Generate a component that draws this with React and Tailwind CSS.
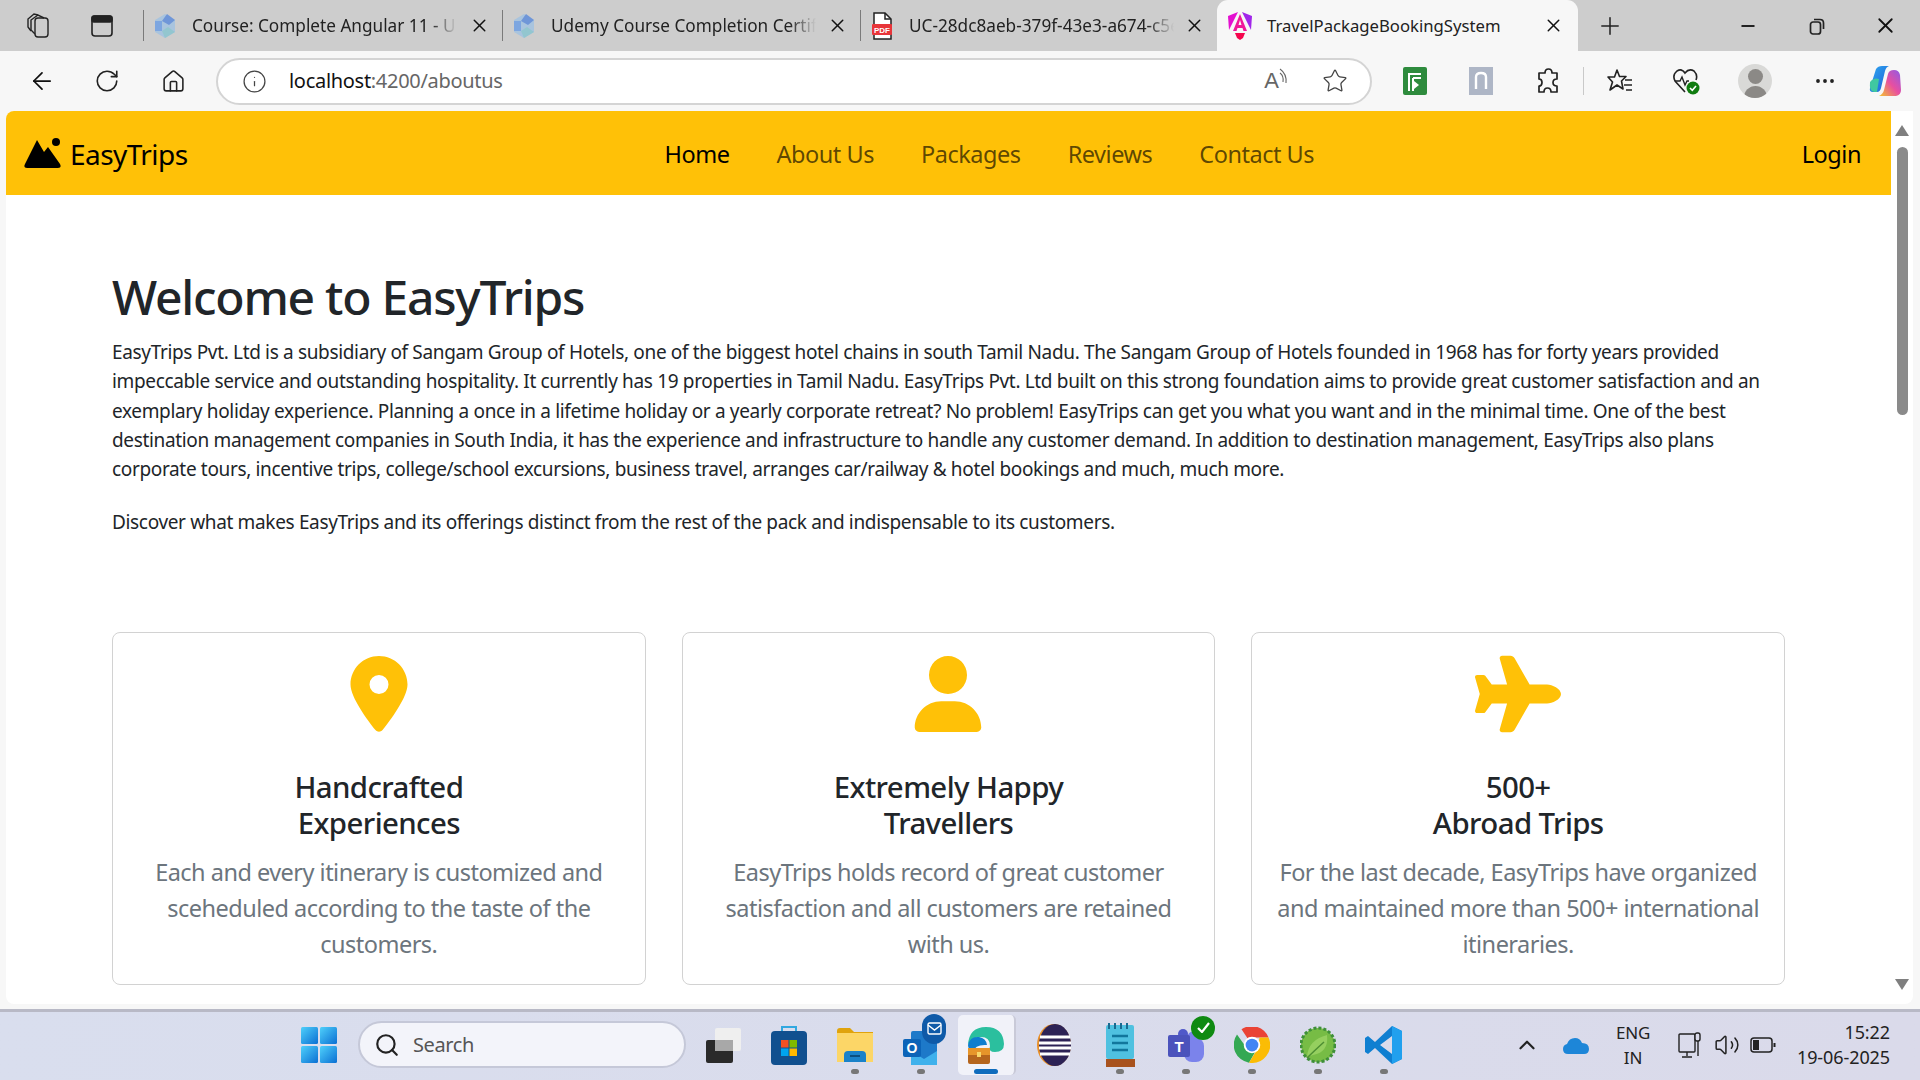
import React from 'react';
import { ArrowLeft, RotateCw, Home, Info, Star, Plus, X, Minus, MoreHorizontal, Search, ChevronUp, Volume2 } from 'lucide-react';
import { FaLocationDot, FaUser, FaPlane } from 'react-icons/fa6';

function EdgeFavicon() {
  return (
    <svg width="22" height="26" viewBox="0 0 22 26">
      <path d="M11 1 L21 7 V19 L11 25 L1 19 V7 Z" fill="#a9c4de" />
      <path d="M13 1 L21 7 L15 12 L8 8 Z" fill="#6f96d8" />
      <path d="M1 8 L8 8 L8 18 L1 18 Z" fill="#7da6e0" />
      <path d="M11 25 L21 19 L14 14 L8 18 Z" fill="#93c6cf" />
    </svg>
  );
}

function PdfFavicon() {
  return (
    <svg width="24" height="28" viewBox="0 0 24 28">
      <path d="M4 1 H15 L21 7 V27 H4 Z" fill="#fff" stroke="#222" strokeWidth="1.5" />
      <path d="M15 1 V7 H21" fill="none" stroke="#222" strokeWidth="1.5" />
      <rect x="2" y="12" width="20" height="11" rx="1" fill="#e8353a" />
      <text x="12" y="21" textAnchor="middle" fontSize="8" fontWeight="700" fill="#fff" fontFamily="Liberation Sans">PDF</text>
    </svg>
  );
}

function AngularFavicon() {
  return (
    <svg width="24" height="30" viewBox="0 0 24 30">
      <path d="M10 1 L1 19 L0 5 Z" fill="#e40fd0" />
      <path d="M14 1 L24 5 L23 19 Z" fill="#a126ea" />
      <path d="M12 3 L19 20 H15.5 L14.5 17 H9.5 L8.5 20 H5 Z M12 9 L10.5 14 H13.5 Z" fill="#f0189a" />
      <path d="M7 22 H17 L15 27 L12 29 L9 27 Z" fill="#f5054e" />
    </svg>
  );
}

function Tab({ icon, title, w }) {
  return (
    <div className={`flex items-center h-[51px] ${w}`}>
      <div className="w-px h-[31px] bg-[#7a7a7a]" />
      <div className="w-[24px] ml-[9px] flex justify-center">{icon}</div>
      <span className="ml-[15px] w-[265px] overflow-hidden text-[17.2px] text-[#222] whitespace-nowrap [mask-image:linear-gradient(to_right,black_90%,transparent)]">{title}</span>
      <X size={21} strokeWidth={1.7} className="ml-auto mr-[12px] text-[#111]" />
    </div>
  );
}

function TabStrip() {
  return (
    <div className="flex items-center h-[51px] bg-[#cdcdcd] pl-[26px]">
      <svg width="24" height="26" viewBox="0 0 24 26" fill="none" stroke="#222" strokeWidth="1.4">
        <rect x="9" y="5" width="13" height="19" rx="3" />
        <path d="M9 21 L5 17 V7 L12 2 L18 5" />
        <path d="M5 18 L2 14 V6 L8 1 L12 2" />
      </svg>
      <svg className="ml-[41px]" width="22" height="24" viewBox="0 0 22 24" fill="none" stroke="#222" strokeWidth="1.6">
        <rect x="1" y="2" width="20" height="20" rx="3" />
        <rect x="1" y="2" width="20" height="6" rx="2" fill="#222" />
      </svg>
      <div className="ml-[30px] flex">
        <Tab icon={<EdgeFavicon />} title="Course: Complete Angular 11 - Ultimate" w="w-[359px]" />
        <Tab icon={<EdgeFavicon />} title="Udemy Course Completion Certificate" w="w-[358px]" />
        <Tab icon={<PdfFavicon />} title="UC-28dc8aeb-379f-43e3-a674-c5e1" w="w-[357px]" />
        <div className="flex items-center h-[51px] w-[361px] rounded-t-[11px] bg-[#f7f7f7] pl-[11px]">
          <AngularFavicon />
          <span className="ml-[15px] text-[16.7px] text-[#222] whitespace-nowrap">TravelPackageBookingSystem</span>
          <X size={21} strokeWidth={1.7} className="ml-auto mr-[14px] text-[#111]" />
        </div>
      </div>
      <Plus size={28} strokeWidth={1.3} className="ml-[18px] text-[#222]" />
      <Minus size={20} strokeWidth={2.2} className="ml-[114px] text-[#222]" />
      <svg className="ml-[51px]" width="16" height="18" viewBox="0 0 16 18" fill="none" stroke="#222" strokeWidth="1.7">
        <rect x="1.5" y="5" width="10" height="12" rx="2.5" />
        <path d="M5 2.5 H11 Q14.5 2.5 14.5 6 V12" />
      </svg>
      <X size={25} strokeWidth={1.7} className="ml-[48px] text-[#111]" />
    </div>
  );
}

function Toolbar() {
  return (
    <div className="flex items-center h-[60px] bg-[#f7f7f7] pl-[28px]">
      <ArrowLeft size={28} strokeWidth={1.5} className="text-[#111]" />
      <RotateCw size={26} strokeWidth={1.5} className="ml-[38px] text-[#222]" />
      <Home size={25} strokeWidth={1.5} className="ml-[41px] text-[#222]" />
      <div className="ml-[30px] flex items-center w-[1156px] h-[47px] bg-white rounded-full border-2 border-[#d4d4d4] pl-[24px] pr-[22px]">
        <Info size={25} strokeWidth={1.2} className="text-[#444]" />
        <span className="ml-[22px] text-[20px] tracking-[-0.015em] text-[#111]">localhost<span className="text-[#666]">:4200/aboutus</span></span>
        <span className="ml-auto text-[22px] leading-none text-[#666] font-['Liberation_Sans',sans-serif]">A</span>
        <svg width="10" height="18" viewBox="0 0 10 18" fill="none" stroke="#666" strokeWidth="1.1" className="mb-[8px]">
          <path d="M1 1 Q8 6 7 15 M1 5 Q5 8 4 14" />
        </svg>
        <Star size={26} strokeWidth={1.2} className="ml-[33px] text-[#444]" />
      </div>
      <svg className="ml-[31px]" width="24" height="28" viewBox="0 0 24 28">
        <rect width="24" height="28" rx="2" fill="#2e8b3d" />
        <path d="M6 24 V7 H18 M10 11 H18 M10 11 V24" fill="none" stroke="#fff" strokeWidth="2" />
        <path d="M11 14 L16 18 L11 22 Z" fill="#fff" />
      </svg>
      <svg className="ml-[42px]" width="24" height="28" viewBox="0 0 24 28">
        <rect width="24" height="28" fill="#aeb6c6" />
        <path d="M7 22 V10 Q7 6 12 6 Q17 6 17 10 V22" fill="none" stroke="#fff" strokeWidth="2.4" />
      </svg>
      <svg className="ml-[43px]" width="24" height="28" viewBox="0 0 24 28" fill="none" stroke="#222" strokeWidth="1.7" strokeLinejoin="round">
        <path d="M9 6 Q9 2 12.5 2 Q16 2 16 6 H21 V12 Q17 12 17 15.500 Q17 19 21 19 V25 H15 Q15 21 11.500 21 Q8 21 8 25 H3 V19 Q6 19 6 15.500 Q6 12 3 12 V6 Z" />
      </svg>
      <div className="ml-[23px] w-px h-[28px] bg-[#c9c9c9]" />
      <svg className="ml-[23px]" width="26" height="28" viewBox="0 0 26 28" fill="none" stroke="#222" strokeWidth="1.6" strokeLinejoin="round">
        <path d="M10 3 L12.500 9.500 H19 L14.500 14 L16 22 L10 18 L3 23 L5.500 15 L1 10 H7.500 Z" />
        <path d="M18 13 H25 M17 18 H25 M19 23 H25" />
      </svg>
      <svg className="ml-[39px]" width="28" height="28" viewBox="0 0 28 28" fill="none">
        <path d="M13 25 L3 14 Q0 8 5 4 Q10 1 13 6 Q17 1 22 4 Q26 8 24 13" stroke="#222" strokeWidth="1.6" />
        <path d="M3 14 H8 L10 10 L13 18 L15 14 H17" stroke="#222" strokeWidth="1.4" />
        <circle cx="21" cy="21" r="6.5" fill="#107c10" />
        <path d="M18 21 L20.300 23.300 L24 19" stroke="#fff" strokeWidth="1.6" />
      </svg>
      <div className="ml-[38px] flex flex-col items-center justify-end w-[34px] h-[34px] rounded-full bg-[#d9d9d7] overflow-hidden">
        <div className="w-[15px] h-[15px] rounded-full bg-[#8b8986]" />
        <div className="mt-[2px] w-[23px] h-[12px] rounded-t-full bg-[#8b8986]" />
      </div>
      <MoreHorizontal size={24} strokeWidth={1.8} className="ml-[41px] text-[#222]" />
      <svg className="ml-[31px]" width="34" height="34" viewBox="0 0 34 34">
        <defs>
          <linearGradient id="cp1" x1="0" y1="0" x2="1" y2="1">
            <stop offset="0" stopColor="#2ea8f0" />
            <stop offset="1" stopColor="#1f5fd8" />
          </linearGradient>
          <linearGradient id="cp2" x1="0" y1="1" x2="1" y2="0">
            <stop offset="0" stopColor="#f5c52c" />
            <stop offset="0.5" stopColor="#e84fa0" />
            <stop offset="1" stopColor="#8d5be8" />
          </linearGradient>
        </defs>
        <path d="M8 5 Q10 2 14 2 H21 Q18 3 17 7 L13 24 Q12 28 9 28 H5 Q1 28 2 24 Z" fill="url(#cp1)" />
        <path d="M26 6 Q31 6 32 11 L33 26 Q33 31 28 32 H11 Q15 30 16 26 L20 10 Q21 6 26 6 Z" fill="url(#cp2)" />
        <path d="M2 18 Q6 13 11 15 L9 28 H6 Q1 27 2 18 Z" fill="#40c8a0" />
      </svg>
    </div>
  );
}

function NavBar() {
  return (
    <div className="flex items-center h-[84px] bg-[#ffc107] pl-[18px] pr-[30px] text-[23.5px] tracking-[-0.02em]">
      <svg width="38" height="30" viewBox="0 0 38 30">
        <circle cx="32" cy="4" r="4" fill="#000" />
        <path d="M13 2 L20 14 L24 9 L36 26 Q38 30 34 30 H3 Q-1 30 1 26 Z" fill="#000" />
      </svg>
      <span className="ml-[8px] pt-[1px] text-[28px] tracking-[-0.02em] text-black">EasyTrips</span>
      <div className="ml-[477px] pt-[3px] flex gap-[47px] text-black/65">
        <span className="text-black">Home</span>
        <span>About Us</span>
        <span>Packages</span>
        <span>Reviews</span>
        <span>Contact Us</span>
      </div>
      <span className="ml-auto pt-[3px] text-black">Login</span>
    </div>
  );
}

const cards = [
  {
    icon: <FaLocationDot size={76} />,
    title: ['Handcrafted', 'Experiences'],
    text: ['Each and every itinerary is customized and', 'sceheduled according to the taste of the', 'customers.'],
  },
  {
    icon: <FaUser size={76} />,
    title: ['Extremely Happy', 'Travellers'],
    text: ['EasyTrips holds record of great customer', 'satisfaction and all customers are retained', 'with us.'],
  },
  {
    icon: <FaPlane size={86} />,
    title: ['500+', 'Abroad Trips'],
    text: ['For the last decade, EasyTrips have organized', 'and maintained more than 500+ international', 'itineraries.'],
  },
];

function Card({ card }) {
  return (
    <div className="flex flex-col items-center h-[353px] pt-[23px] border border-[#d2d2d2] rounded-[8px] text-center">
      <div className="h-[76px] flex items-center text-[#ffc107]">{card.icon}</div>
      <h3 className="mt-[37px] text-[29.4px] leading-[36px] font-medium tracking-[-0.02em] text-[#212529]">
        {card.title[0]}<br />{card.title[1]}
      </h3>
      <p className="mt-[13px] text-[23.5px] leading-[36px] tracking-[-0.022em] text-[#6c757d]">
        {card.text[0]}<br />{card.text[1]}<br />{card.text[2]}
      </p>
    </div>
  );
}

function Page() {
  return (
    <div className="flex-1 min-w-0 overflow-hidden">
      <NavBar />
      <div className="pl-[106px] pr-[106px] pt-[72px]">
        <h1 className="text-[48px] leading-[59px] font-medium tracking-[-0.026em] text-[#212529]">Welcome to EasyTrips</h1>
        <p className="mt-[12px] text-[19px] leading-[29.3px] tracking-[-0.018em] text-[#212529] whitespace-nowrap">
          EasyTrips Pvt. Ltd is a subsidiary of Sangam Group of Hotels, one of the biggest hotel chains in south Tamil Nadu. The Sangam Group of Hotels founded in 1968 has for forty years provided<br />
          impeccable service and outstanding hospitality. It currently has 19 properties in Tamil Nadu. EasyTrips Pvt. Ltd built on this strong foundation aims to provide great customer satisfaction and an<br />
          exemplary holiday experience. Planning a once in a lifetime holiday or a yearly corporate retreat? No problem! EasyTrips can get you what you want and in the minimal time. One of the best<br />
          destination management companies in South India, it has the experience and infrastructure to handle any customer demand. In addition to destination management, EasyTrips also plans<br />
          corporate tours, incentive trips, college/school excursions, business travel, arranges car/railway &amp; hotel bookings and much, much more.
        </p>
        <p className="mt-[24px] text-[19px] leading-[29.3px] tracking-[-0.018em] text-[#212529]">
          Discover what makes EasyTrips and its offerings distinct from the rest of the pack and indispensable to its customers.
        </p>
        <div className="mt-[94px] grid grid-cols-3 gap-[36px] w-[1673px]">
          {cards.map((c) => <Card key={c.title[0]} card={c} />)}
        </div>
      </div>
    </div>
  );
}

function Scrollbar() {
  return (
    <div className="w-[22px] flex flex-col items-center pt-[14px] pb-[14px]">
      <div className="w-0 h-0 border-x-[7px] border-x-transparent border-b-[11px] border-b-[#7f7f7f]" />
      <div className="mt-[11px] w-[11px] h-[268px] rounded-full bg-[#8a8a8a]" />
      <div className="mt-auto w-0 h-0 border-x-[7px] border-x-transparent border-t-[11px] border-t-[#7f7f7f]" />
    </div>
  );
}

function TaskIcon({ children, dot, dotClass }) {
  return (
    <div className="relative w-[66px] h-[60px] flex items-center justify-center">
      {children}
      {dot && <div className={`absolute bottom-[1px] left-1/2 -translate-x-1/2 h-[5px] rounded-full ${dotClass || 'w-[8px] bg-[#777]'}`} />}
    </div>
  );
}

function Taskbar() {
  return (
    <div className="flex items-center h-[71px] border-t-[3px] border-[#b8b9c6] bg-gradient-to-r from-[#d9deee] to-[#dadaea] pl-[301px] pr-[30px] pb-[3px]">
      <svg width="36" height="36" viewBox="0 0 36 36">
        <defs>
          <linearGradient id="win" x1="0" y1="0" x2="1" y2="1">
            <stop offset="0" stopColor="#4fd0fb" />
            <stop offset="1" stopColor="#0a6fd3" />
          </linearGradient>
        </defs>
        <rect width="17" height="17" rx="1.500" fill="url(#win)" />
        <rect x="19" width="17" height="17" rx="1.500" fill="url(#win)" />
        <rect y="19" width="17" height="17" rx="1.500" fill="url(#win)" />
        <rect x="19" y="19" width="17" height="17" rx="1.500" fill="url(#win)" />
      </svg>
      <div className="ml-[21px] flex items-center w-[328px] h-[47px] rounded-full bg-[#f3f4fa] border-2 border-[#c5c8d8] pl-[14px]">
        <Search size={26} strokeWidth={2} className="text-[#222]" />
        <span className="ml-[13px] text-[20px] tracking-[-0.02em] text-[#555]">Search</span>
      </div>
      <div className="ml-[4px] flex">
        <TaskIcon>
          <svg width="40" height="36" viewBox="0 0 40 36">
            <rect x="3" y="13" width="27" height="23" rx="2" fill="#2a2a2a" />
            <rect x="12" y="1" width="26" height="23" rx="2" fill="#efefef" />
            <rect x="12" y="13" width="18" height="11" fill="#a8a8a8" />
          </svg>
        </TaskIcon>
        <TaskIcon>
          <svg width="36" height="40" viewBox="0 0 36 40">
            <path d="M11 7 V2 H25 V7" fill="none" stroke="#32a8e0" strokeWidth="2" />
            <rect y="6" width="36" height="34" rx="4" fill="#11508f" />
            <rect x="10" y="15" width="7.500" height="7.500" fill="#f25022" />
            <rect x="18.500" y="15" width="7.500" height="7.500" fill="#7fba00" />
            <rect x="10" y="23.500" width="7.500" height="7.500" fill="#00a4ef" />
            <rect x="18.500" y="23.500" width="7.500" height="7.500" fill="#ffb900" />
          </svg>
        </TaskIcon>
        <TaskIcon dot>
          <svg width="36" height="34" viewBox="0 0 36 34">
            <path d="M0 3 Q0 0 3 0 H13 L17 4 H36 V34 H0 Z" fill="#e0a30c" />
            <rect y="5" width="36" height="29" fill="#fcd667" />
            <path d="M7 34 V27 Q7 23 11 23 H25 Q29 23 29 27 V34 Z" fill="#1a82c9" />
            <rect x="13" y="27" width="10" height="2" fill="#0b4f80" />
          </svg>
        </TaskIcon>
        <TaskIcon dot>
          <div className="relative w-[36px] h-[40px]">
            <svg width="36" height="40" viewBox="0 0 36 40">
              <rect x="8" y="6" width="26" height="34" rx="2" fill="#1d79c9" />
              <path d="M8 26 L21 34 L34 26 V40 H8 Z" fill="#3fb1ec" />
              <rect y="14" width="18" height="18" rx="2" fill="#0c64b8" />
              <text x="9" y="28" textAnchor="middle" fontSize="14" fontWeight="700" fill="#fff" fontFamily="Liberation Sans">O</text>
            </svg>
            <div className="absolute -top-[11px] -right-[7px] w-[24px] h-[30px] rounded-full bg-[#0f5aa8] flex items-center justify-center">
              <svg width="15" height="13" viewBox="0 0 15 13" fill="none" stroke="#fff" strokeWidth="1.400">
                <rect x="1" y="1" width="13" height="11" rx="1.500" />
                <path d="M1 3 L7.500 8 L14 3" />
              </svg>
            </div>
          </div>
        </TaskIcon>
        <div className="relative w-[58px] h-[60px] mx-[4px] rounded-[5px] bg-[#f1f2f9] border-r-2 border-[#c9cad8] flex items-center justify-center">
          <svg width="38" height="38" viewBox="0 0 38 38">
            <path d="M1 19 Q2 1 19 1 Q36 1 37 18 Q37 26 28 26 Q21 26 23 20 Q23 11 14 11 Q5 11 1 19 Z" fill="#2bbf9e" />
            <path d="M1 19 Q3 10 12 11 Q19 12 20 19 Q8 18 6 26 Q1 24 1 19 Z" fill="#0f7ecf" />
            <rect x="1" y="22" width="22" height="16" rx="2" fill="#b5651d" />
            <rect x="1" y="22" width="22" height="7" fill="#e6952a" />
            <rect x="10" y="26" width="4" height="5" fill="#f7d66a" />
          </svg>
          <div className="absolute bottom-[1px] left-1/2 -translate-x-1/2 w-[24px] h-[5px] rounded-full bg-[#0f6cbd]" />
        </div>
        <div className="-ml-[1px] mr-[2px]">
          <TaskIcon>
            <svg width="37" height="42" viewBox="0 0 37 42">
              <ellipse cx="20" cy="21" rx="17" ry="21" fill="#e8902a" />
              <ellipse cx="21" cy="21" rx="16" ry="21" fill="#2c2255" />
              <path d="M6 13 H36 M5 19 H37 M5 24 H37 M6 30 H36" stroke="#fff" strokeWidth="3" />
            </svg>
          </TaskIcon>
        </div>
        <TaskIcon dot>
          <svg width="29" height="44" viewBox="0 0 29 44">
            <rect y="2" width="28" height="34" rx="2" fill="#4fc1e0" />
            <path d="M3 0 V6 M9 0 V6 M15 0 V6 M21 0 V6" stroke="#1a6a90" strokeWidth="2" />
            <path d="M6 13 H22 M6 20 H22 M6 27 H22" stroke="#11769c" strokeWidth="2.500" />
            <rect y="36" width="29" height="8" fill="#a8521e" />
          </svg>
        </TaskIcon>
        <TaskIcon dot>
          <div className="relative w-[36px] h-[36px]">
            <svg width="36" height="36" viewBox="0 0 36 36">
              <circle cx="25" cy="10" r="5.500" fill="#7b83eb" />
              <rect x="16" y="11" width="20" height="24" rx="8" fill="#7b83eb" />
              <circle cx="15" cy="7" r="5" fill="#5059c9" />
              <rect y="8" width="22" height="22" rx="2" fill="#4b53bc" />
              <text x="11" y="25" textAnchor="middle" fontSize="15" fontWeight="700" fill="#fff" fontFamily="Liberation Sans">T</text>
            </svg>
            <div className="absolute -top-[11px] -right-[11px] w-[24px] h-[24px] rounded-full bg-[#0f8a12] flex items-center justify-center">
              <svg width="13" height="11" viewBox="0 0 13 11" fill="none" stroke="#fff" strokeWidth="2.200"><path d="M1 6 L5 10 L12 1" /></svg>
            </div>
          </div>
        </TaskIcon>
        <TaskIcon dot>
          <svg width="36" height="36" viewBox="0 0 48 48">
            <path d="M24 24 L10 3 A24 24 0 0 1 46 14 L24 14 Z" fill="#ea4335" />
            <path d="M4 10 A24 24 0 0 0 20 47.500 L30 30 L24 34 L14 24 Z" fill="#34a853" />
            <path d="M46 14 A24 24 0 0 1 20 47.500 L32 28 L34 14 Z" fill="#fbbc05" />
            <circle cx="24" cy="24" r="11" fill="#fff" />
            <circle cx="24" cy="24" r="8.500" fill="#4285f4" />
          </svg>
        </TaskIcon>
        <TaskIcon dot>
          <svg width="36" height="40" viewBox="0 0 36 40">
            <circle cx="18" cy="20" r="17" fill="#77bc45" strokeDasharray="3 2" stroke="#3f8f3a" strokeWidth="3" />
            <path d="M7 32 Q8 15 27 10 Q29 27 13 30 Z" fill="#95cf5f" />
            <path d="M7 33 Q13 27 24 17" stroke="#4e8f33" strokeWidth="1.500" fill="none" />
          </svg>
        </TaskIcon>
        <TaskIcon dot>
          <svg width="38" height="38" viewBox="0 0 38 38">
            <path d="M27 0 L37 5 V33 L27 38 L10 22 L3 28 L0 26 V12 L3 10 L10 16 Z M27 10 L15 19 L27 28 Z" fill="#0f7fd1" />
            <path d="M27 0 L37 5 V33 L27 38 Z" fill="#21a0ee" />
          </svg>
        </TaskIcon>
      </div>
      <ChevronUp size={26} strokeWidth={2} className="ml-[97px] text-[#222]" />
      <svg className="ml-[23px]" width="26" height="18" viewBox="0 0 26 18">
        <path d="M5 18 Q0 18 0 13 Q0 9 4 8 Q6 2 12 2 Q17 2 19 7 Q26 7 26 13 Q26 18 21 18 Z" fill="#1d86d8" />
      </svg>
      <div className="ml-[21px] w-[46px] text-center text-[17px] leading-[25px] tracking-[-0.01em] text-[#222]">ENG<br />IN</div>
      <svg className="ml-[22px]" width="24" height="26" viewBox="0 0 24 26" fill="none" stroke="#222" strokeWidth="1.400">
        <rect x="1" y="2" width="16" height="18" rx="1" />
        <path d="M9 20 V24 M4 25 H14" />
        <rect x="17" y="1" width="5" height="8" rx="2" fill="#dadaea" />
        <path d="M20 9 V24" />
      </svg>
      <Volume2 size={26} strokeWidth={1.4} className="ml-[12px] text-[#222]" />
      <svg className="ml-[10px]" width="26" height="16" viewBox="0 0 26 16" fill="none" stroke="#222" strokeWidth="1.500">
        <rect x="1" y="1" width="21" height="14" rx="3" />
        <rect x="3" y="3" width="6" height="10" fill="#222" stroke="none" />
        <path d="M24.500 6 V10" strokeWidth="2" />
      </svg>
      <div className="ml-auto text-right text-[18px] leading-[25px] tracking-[-0.005em] text-[#222]">15:22<br />19-06-2025</div>
    </div>
  );
}

export default function App() {
  return (
    <div className="flex flex-col w-[1920px] h-[1080px] overflow-hidden bg-[#f7f7f7] font-['Noto_Sans',sans-serif]">
      <TabStrip />
      <Toolbar />
      <div className="flex flex-1 min-h-0 pl-[6px] pr-[7px]">
        <div className="flex flex-1 min-w-0 bg-white rounded-tl-[8px] rounded-b-[8px] overflow-hidden">
          <Page />
          <Scrollbar />
        </div>
      </div>
      <div className="h-[5px]" />
      <Taskbar />
    </div>
  );
}
